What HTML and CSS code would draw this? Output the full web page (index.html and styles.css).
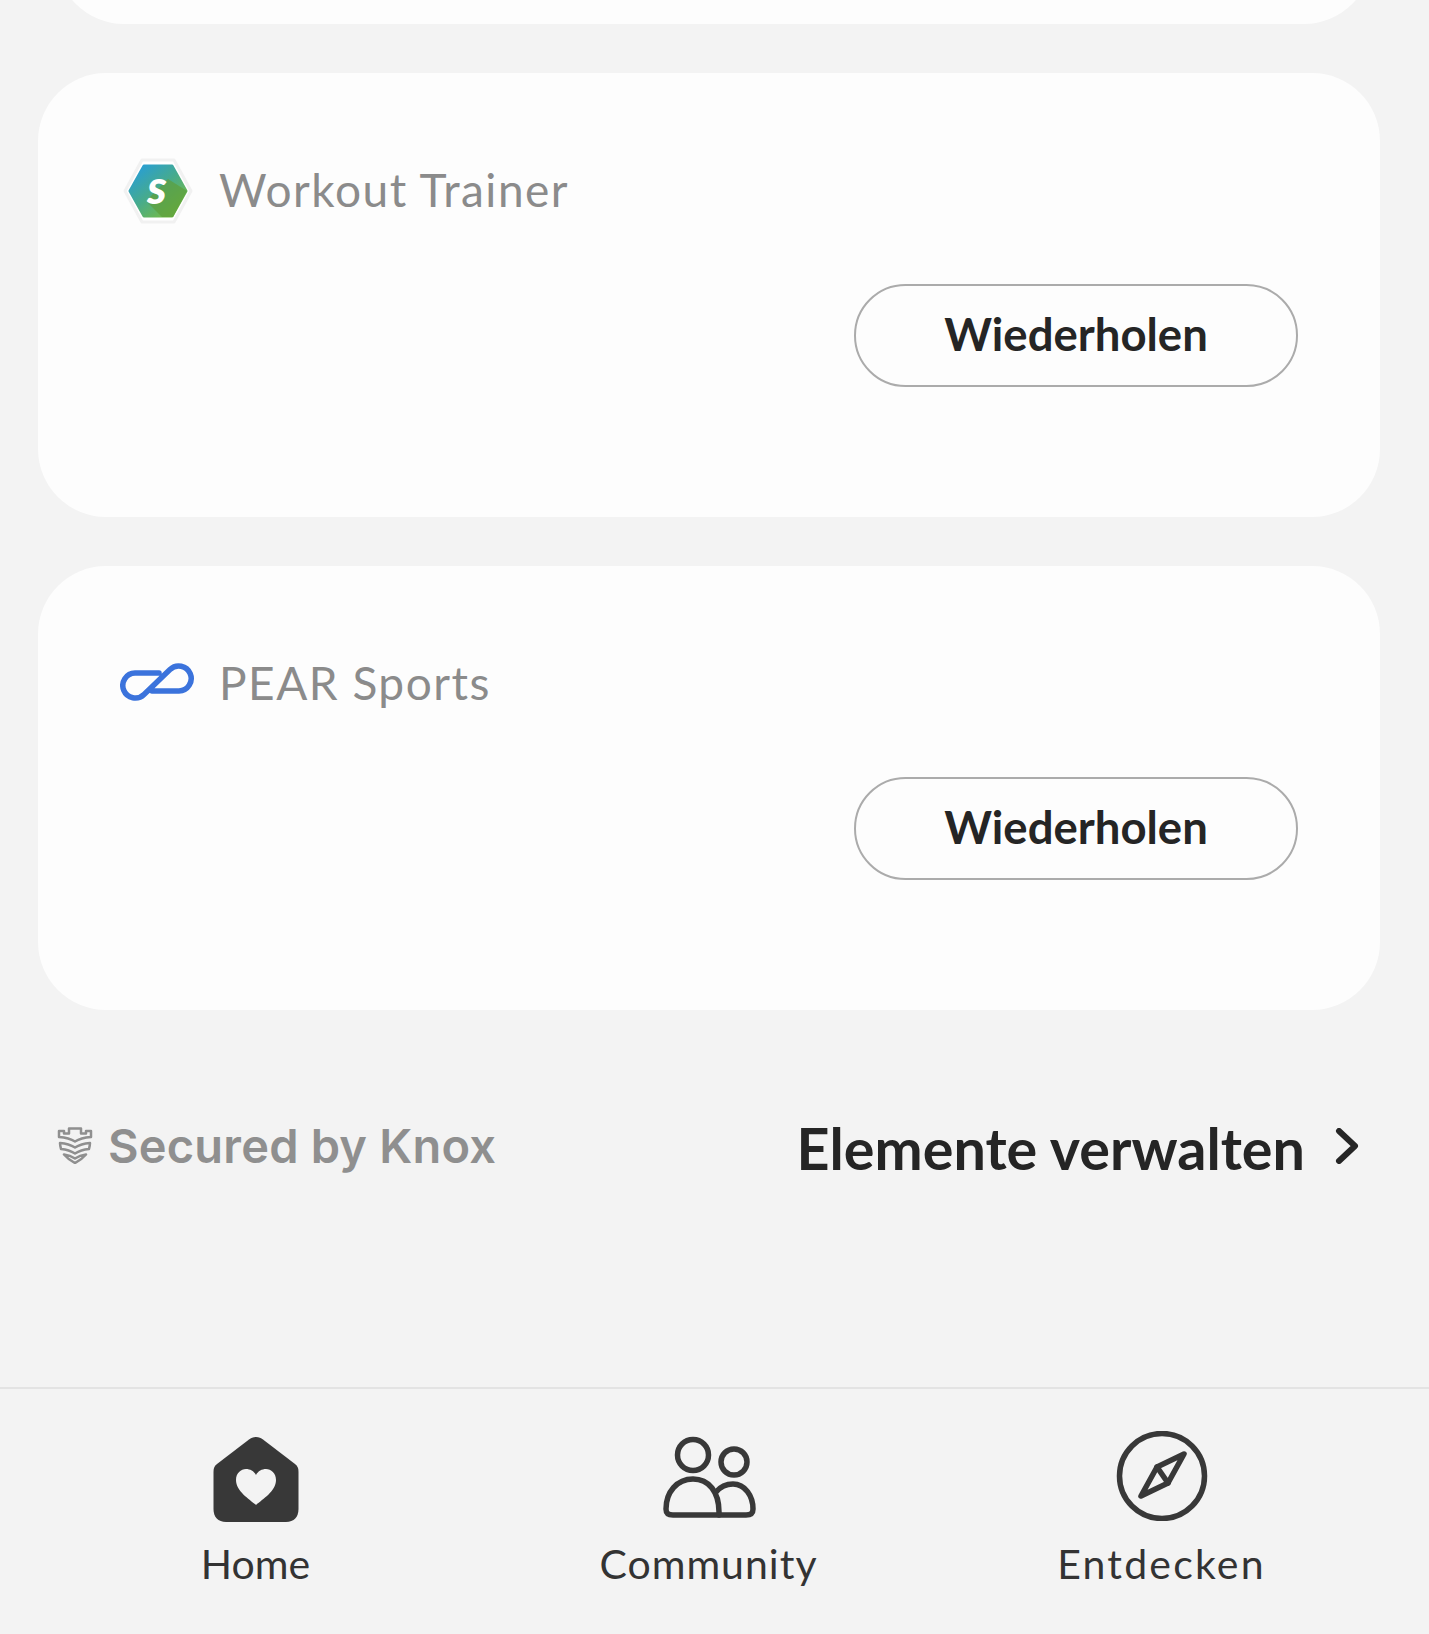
FILE: index.html
```html
<!DOCTYPE html>
<html lang="de">
<head>
    <title>Elemente</title>
    <link rel="stylesheet" href="styles.css">
</head>
<body>
    <div class="page">
        <main class="content">
            <div class="card card-top"></div>

            <section class="card">
                <div class="app-row">
                    <svg class="app-logo" viewBox="0 0 76 76">
                        <defs>
                            <linearGradient id="hexFill" x1="0.1" y1="0.1" x2="0.8" y2="0.9">
                                <stop offset="0" stop-color="#2a9fd0"/>
                                <stop offset="0.5" stop-color="#47ab8c"/>
                                <stop offset="1" stop-color="#74bb46"/>
                            </linearGradient>
                        </defs>
                        <path class="hex-halo" d="M22 7H54L71 38L54 69H22L5 38Z"/>
                        <path class="hex-body" d="M24 13H52L66 38L52 63H24L10 38Z" fill="url(#hexFill)"/>
                        <path class="hex-shade" d="M26 48L48 26L67 38L53 64H42Z"/>
                        <text class="hex-letter" x="37" y="51" text-anchor="middle">s</text>
                    </svg>
                    <span class="app-name">Workout Trainer</span>
                </div>
                <div class="card-actions">
                    <button class="retry-btn">Wiederholen</button>
                </div>
            </section>

            <section class="card">
                <div class="app-row">
                    <svg class="app-logo" viewBox="0 0 76 76">
                        <path class="pear-mark" d="M39 27H15A12.5 12.5 0 1 0 24 48.500L50 23.500A12.500 12.500 0 1 1 59 45H32"/>
                    </svg>
                    <span class="app-name">PEAR Sports</span>
                </div>
                <div class="card-actions">
                    <button class="retry-btn">Wiederholen</button>
                </div>
            </section>

            <div class="footer-row">
                <div class="knox">
                    <svg class="knox-icon" viewBox="0 0 36 38">
                        <path d="M2 11V5H7V7.500H12V2.500H24V7.500H29V5H34V11C28 11.500 22 13 18 15.500C14 13 8 11.500 2 11Z"/>
                        <path d="M3 17C9 17.500 14 19 18 21.500C22 19 27 17.500 33 17C33 19 32.500 21 32 23C27 23.500 22 25 18 27.500C14 25 9 23.500 4 23C3.500 21 3 19 3 17Z"/>
                        <path d="M7 28.500C11 29 15 30.500 18 32.500C21 30.500 25 29 29 28.500C26 32 22 35 18 37C14 35 10 32 7 28.500Z"/>
                    </svg>
                    <span class="knox-text">Secured by Knox</span>
                </div>
                <a class="manage-link">
                    <span>Elemente verwalten</span>
                    <svg class="chevron" viewBox="0 0 24 36">
                        <path d="M4 3L20 18L4 33"/>
                    </svg>
                </a>
            </div>
        </main>

        <nav class="tabbar">
            <a class="tab">
                <svg class="tab-icon" viewBox="0 -1 90 90">
                    <path class="icon-solid" d="M45 2C42 2 40 3 38 4.500L6 29C3.500 31 2.500 33 2.500 37V74C2.500 82 7 87 15 87H75C83 87 87.500 82 87.500 74V37C87.500 33 86.500 31 84 29L52 4.500C50 3 48 2 45 2Z"/>
                    <path class="icon-cut" d="M45 70C38 64 25 56 25 45C25 38 30 34 35 34C39 34 43 36 45 40C47 36 51 34 55 34C60 34 65 38 65 45C65 56 52 64 45 70Z"/>
                </svg>
                <span class="tab-label label-tight">Home</span>
            </a>
            <a class="tab">
                <svg class="tab-icon" viewBox="0 0 96 90">
                    <g class="icon-line">
                        <circle cx="32" cy="21" r="15.500"/>
                        <circle cx="73" cy="28" r="13"/>
                        <path d="M5 75C5 58 16 45 32 45C48 45 58 58 58 78V81H12C7 81 5 79 5 75Z"/>
                        <path d="M55 58C60 52 66 50 72 50C84 50 92 62 92 75C92 79 90 81 85 81H58"/>
                    </g>
                </svg>
                <span class="tab-label">Community</span>
            </a>
            <a class="tab">
                <svg class="tab-icon icon-compass" viewBox="0 0 90 90">
                    <g class="icon-line">
                        <circle cx="45" cy="45" r="42.500"/>
                        <path d="M67 23L40 36L24 65L51 52Z"/>
                        <path d="M40 36L51 52"/>
                    </g>
                </svg>
                <span class="tab-label label-wide">Entdecken</span>
            </a>
        </nav>
    </div>
</body>
</html>
```

FILE: styles.css
```css
html, body {
    margin: 0;
    padding: 0;
}
body {
    background: #f3f3f3;
    font-family: "Lato", "Noto Sans", sans-serif;
    color: #252525;
}
.page {
    height: 1634px;
    overflow: hidden;
    display: flex;
    flex-direction: column;
}
.content {
    flex: 1;
    padding: 0 49px 0 38px;
    box-sizing: border-box;
}

/* cards */
.card {
    background: #fdfdfd;
    border-radius: 68px;
    height: 444px;
    margin-bottom: 49px;
    padding: 80px 82px 0 82px;
    box-sizing: border-box;
}
.card-top {
    margin-top: -420px;
    margin-left: 18px;
    margin-right: 8px;
}
.app-row {
    display: flex;
    align-items: center;
    gap: 23px;
    height: 76px;
}
.app-logo {
    width: 76px;
    height: 76px;
}
.app-name {
    font-size: 46px;
    color: #8b8b8b;
    letter-spacing: 1.5px;
    margin-top: -4px;
}
.card-actions {
    display: flex;
    justify-content: flex-end;
    margin-top: 55px;
}
.retry-btn {
    width: 444px;
    height: 103px;
    background: transparent;
    border: 2px solid #ababab;
    border-radius: 52px;
    font-family: inherit;
    font-size: 45.5px;
    font-weight: 700;
    color: #252525;
    padding: 0 0 4px;
}

/* logos */
.hex-halo {
    fill: #ffffff;
    stroke: #f1f1f1;
    stroke-width: 3;
    stroke-linejoin: round;
}
.hex-body {
    stroke: url(#hexFill);
    stroke-width: 3;
    stroke-linejoin: round;
}
.hex-shade {
    fill: #5c9e3c;
    opacity: 0.7;
}
.hex-letter {
    font-family: "Lato", sans-serif;
    font-size: 48px;
    font-weight: 900;
    font-style: italic;
    fill: #ffffff;
}
.pear-mark {
    fill: none;
    stroke: #3b73dc;
    stroke-width: 5.500;
    stroke-linecap: round;
    stroke-linejoin: round;
}

/* footer row */
.footer-row {
    display: flex;
    justify-content: space-between;
    align-items: center;
    margin-top: 103px;
    padding: 0 21px 0 19px;
}
.knox {
    display: flex;
    align-items: center;
    gap: 15px;
    margin-top: -5px;
}
.knox-icon {
    width: 36px;
    height: 38px;
    fill: none;
    stroke: #8f8f8f;
    stroke-width: 2.500;
    stroke-linejoin: round;
}
.knox-text {
    font-family: "Inter", sans-serif;
    font-size: 47px;
    font-weight: 600;
    color: #8f8f8f;
    letter-spacing: 0.2px;
}
.manage-link {
    display: flex;
    align-items: center;
    gap: 30px;
    font-size: 57.5px;
    font-weight: 700;
    color: #252525;
}
.chevron {
    width: 24px;
    height: 36px;
    margin-top: -3px;
    fill: none;
    stroke: #252525;
    stroke-width: 6;
    stroke-linecap: round;
    stroke-linejoin: round;
}

/* bottom nav */
.tabbar {
    height: 247px;
    flex-shrink: 0;
    border-top: 2px solid #e3e3e3;
    box-sizing: border-box;
    display: grid;
    grid-template-columns: repeat(3, 453px);
    padding-left: 29px;
    padding-top: 45px;
}
.tab {
    display: flex;
    flex-direction: column;
    align-items: center;
    font-size: 41px;
    color: #333333;
}
.tab-icon {
    height: 90px;
    width: 96px;
    margin-bottom: 15px;
}
.icon-compass {
    margin-top: -3px;
    margin-bottom: 18px;
}
.tab-label {
    letter-spacing: 1px;
}
.label-tight {
    letter-spacing: 0;
}
.label-wide {
    letter-spacing: 2.2px;
}
.icon-solid {
    fill: #383838;
}
.icon-cut {
    fill: #f3f3f3;
}
.icon-line {
    fill: none;
    stroke: #383838;
    stroke-width: 5.500;
    stroke-linecap: round;
    stroke-linejoin: round;
}
```
